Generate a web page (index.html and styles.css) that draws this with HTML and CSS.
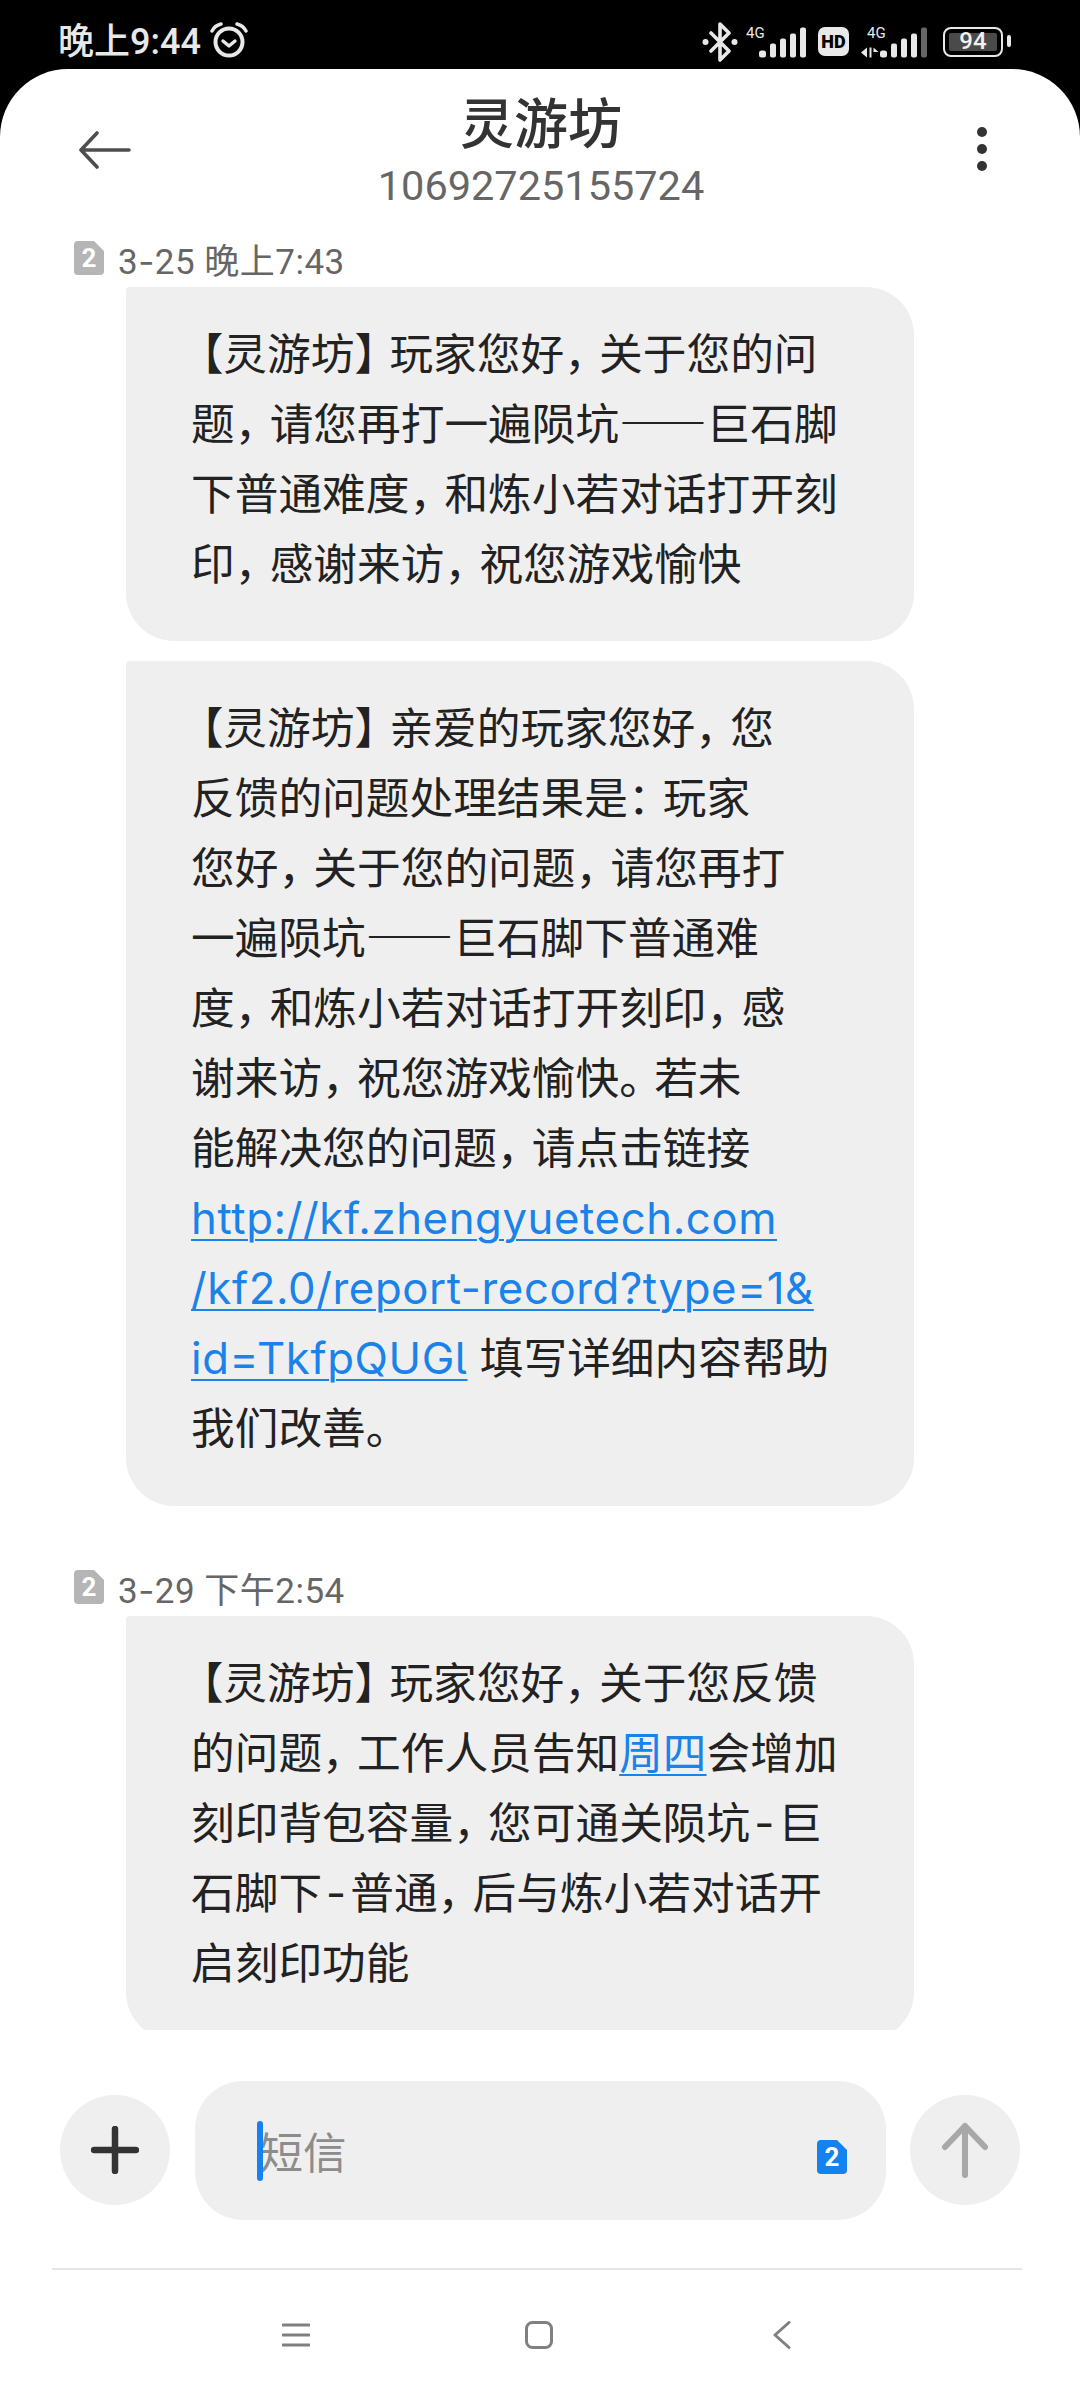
FILE: index.html
```html
<!DOCTYPE html>
<html lang="zh-CN">
<head>
    <meta charset="UTF-8">
    <meta name="viewport" content="width=device-width, initial-scale=1.0">
    <title>灵游坊 - 短信</title>
    <link rel="stylesheet" href="styles.css">
</head>
<body>

<div class="status-bar">
    <div class="status-left">
        <span class="clock">晚上9:44</span>
        <svg class="alarm" viewBox="0 0 40 36" width="40" height="36">
            <circle cx="20" cy="20" r="13.5" fill="none" stroke="#e8e8e8" stroke-width="4"/>
            <path d="M14 19l6 5 6-5" fill="none" stroke="#e8e8e8" stroke-width="3.4" stroke-linecap="round" stroke-linejoin="round"/>
            <path d="M3 9C5 5 8 3 12 2M37 9C35 5 32 3 28 2" fill="none" stroke="#e8e8e8" stroke-width="3.4" stroke-linecap="round"/>
        </svg>
    </div>
    <div class="status-right">
        <svg class="bluetooth" viewBox="0 0 36 40" width="36" height="40">
            <path d="M9 11l18 18-9 9V2l9 9-18 18" fill="none" stroke="#e8e8e8" stroke-width="3.6" stroke-linejoin="round" stroke-linecap="round"/>
            <circle cx="3.5" cy="20" r="3" fill="#e8e8e8"/>
            <circle cx="32.5" cy="20" r="3" fill="#e8e8e8"/>
        </svg>
        <svg class="signal" viewBox="0 0 60 36" width="60" height="36">
            <text x="0" y="13.5" class="net-label">4G</text>
            <rect x="13" y="26.5" width="7" height="7" rx="2.5" fill="#e8e8e8"/>
            <rect x="24" y="19.5" width="6" height="14" rx="2" fill="#e8e8e8"/>
            <rect x="34" y="14.5" width="6" height="19" rx="2" fill="#e8e8e8"/>
            <rect x="44" y="9.5" width="6" height="24" rx="2" fill="#e8e8e8"/>
            <rect x="54" y="3.5" width="6" height="30" rx="2" fill="#e8e8e8"/>
        </svg>
        <div class="hd">HD</div>
        <svg class="signal-two" viewBox="0 0 66 36" width="66" height="36">
            <text x="6" y="13.5" class="net-label">4G</text>
            <path d="M6 23.5l-6 5 6 5zM8.500 23.500h2v10h-2zM12.500 23.500l5 4.500h-5z" fill="#e8e8e8"/>
            <rect x="19" y="26.500" width="7" height="7" rx="2.500" fill="#e8e8e8"/>
            <rect x="30" y="19.500" width="6" height="14" rx="2" fill="#e8e8e8"/>
            <rect x="40" y="14.500" width="6" height="19" rx="2" fill="#e8e8e8"/>
            <rect x="50" y="9.500" width="6" height="24" rx="2" fill="#e8e8e8"/>
            <rect x="60" y="3.500" width="6" height="30" rx="2" fill="#666"/>
        </svg>
        <div class="battery">
            <div class="battery-level">94</div>
        </div>
    </div>
</div>

<div class="sheet">
    <header class="top-bar">
        <svg class="back-arrow" viewBox="0 0 54 38" width="54" height="38">
            <path d="M51 19H3M19 2L3 19l16 17" fill="none" stroke="#4d4d4d" stroke-width="3.6" stroke-linecap="round" stroke-linejoin="round"/>
        </svg>
        <div class="contact">
            <div class="contact-name">灵游坊</div>
            <div class="contact-number">10692725155724</div>
        </div>
        <div class="more-dots">
            <span></span>
            <span></span>
            <span></span>
        </div>
    </header>

    <main class="messages">
        <section class="day-group">
            <div class="stamp">
                <svg class="sim-badge" viewBox="0 0 30 34" width="30" height="34">
                    <path d="M4 0h16l10 10v20a4 4 0 0 1-4 4H4a4 4 0 0 1-4-4V4a4 4 0 0 1 4-4z" fill="#b5b5b5"/>
                    <text x="15" y="26" class="sim-number">2</text>
                </svg>
                <span>3<b class="dash">-</b>25 晚上7:43</span>
            </div>
            <div class="bubble"><b class="open">【</b>灵游坊<b class="pu">】</b>玩家您好<b class="pu">，</b>关于您的问<br>题<b class="pu">，</b>请您再打一遍陨坑<b class="long-dash">——</b>巨石脚<br>下普通难度<b class="pu">，</b>和炼小若对话打开刻<br>印<b class="pu">，</b>感谢来访<b class="pu">，</b>祝您游戏愉快</div>
            <div class="bubble bubble-long"><b class="open">【</b>灵游坊<b class="pu">】</b>亲爱的玩家您好<b class="pu">，</b>您<br>反馈的问题处理结果是<b class="pu">：</b>玩家<br>您好<b class="pu">，</b>关于您的问题<b class="pu">，</b>请您再打<br>一遍陨坑<b class="long-dash">——</b>巨石脚下普通难<br>度<b class="pu">，</b>和炼小若对话打开刻印<b class="pu">，</b>感<br>谢来访<b class="pu">，</b>祝您游戏愉快<b class="pu">。</b>若未<br>能解决您的问题<b class="pu">，</b>请点击链接<br><a href="#" class="url">http://kf.zhengyuetech.com</a><br><a href="#" class="url">/kf2.0/report-record?type=1&amp;</a><br><a href="#" class="url">id=TkfpQUGl</a> 填写详细内容帮助<br>我们改善<b class="pu">。</b></div>
        </section>

        <section class="day-group day-group-next">
            <div class="stamp">
                <svg class="sim-badge" viewBox="0 0 30 34" width="30" height="34">
                    <path d="M4 0h16l10 10v20a4 4 0 0 1-4 4H4a4 4 0 0 1-4-4V4a4 4 0 0 1 4-4z" fill="#b5b5b5"/>
                    <text x="15" y="26" class="sim-number">2</text>
                </svg>
                <span>3<b class="dash">-</b>29 下午2:54</span>
            </div>
            <div class="bubble"><b class="open">【</b>灵游坊<b class="pu">】</b>玩家您好<b class="pu">，</b>关于您反馈<br>的问题<b class="pu">，</b>工作人员告知<a href="#">周四</a>会增加<br>刻印背包容量<b class="pu">，</b>您可通关陨坑<b class="hy">-</b>巨<br>石脚下<b class="hy">-</b>普通<b class="pu">，</b>后与炼小若对话开<br>启刻印功能</div>
        </section>
    </main>

    <div class="composer">
        <div class="round-btn">
            <svg viewBox="0 0 48 48" width="48" height="48">
                <path d="M24 3v42M3 24h42" fill="none" stroke="#333" stroke-width="6.5" stroke-linecap="round"/>
            </svg>
        </div>
        <div class="input-box">
            <i class="caret"></i>
            <span class="placeholder">短信</span>
            <svg class="sim-active" viewBox="0 0 30 34" width="30" height="34">
                <path d="M4 0h16l10 10v20a4 4 0 0 1-4 4H4a4 4 0 0 1-4-4V4a4 4 0 0 1 4-4z" fill="#1482f0"/>
                <text x="15" y="26" class="sim-number">2</text>
            </svg>
        </div>
        <div class="round-btn">
            <svg viewBox="0 0 48 56" width="48" height="56">
                <path d="M24 53V4M4 25L24 4l20 21" fill="none" stroke="#a8a8a8" stroke-width="6" stroke-linecap="round" stroke-linejoin="round"/>
            </svg>
        </div>
    </div>

    <nav class="nav-bar">
        <svg viewBox="0 0 28 26" width="28" height="26">
            <path d="M1 3h26M1 13h26M1 23h26" fill="none" stroke="#808080" stroke-width="3" stroke-linecap="round"/>
        </svg>
        <svg class="nav-home" viewBox="0 0 28 28" width="28" height="28">
            <rect x="1.5" y="1.5" width="25" height="25" rx="6" fill="none" stroke="#808080" stroke-width="3"/>
        </svg>
        <svg viewBox="0 0 18 28" width="18" height="28">
            <path d="M16 1.5L2 14l14 12.5" fill="none" stroke="#808080" stroke-width="3" stroke-linecap="round" stroke-linejoin="round"/>
        </svg>
    </nav>
</div>

</body>
</html>
```

FILE: styles.css
```css
* {
    margin: 0;
    padding: 0;
    box-sizing: border-box;
}

body {
    width: 1080px;
    height: 2400px;
    overflow: hidden;
    background-color: #000;
    font-family: "Roboto", "Noto Sans CJK SC", sans-serif;
    display: flex;
    flex-direction: column;
}

/* Status bar */
.status-bar {
    height: 69px;
    flex: none;
    display: flex;
    justify-content: space-between;
    align-items: center;
    padding: 14px 77px 0 58px;
    color: #e8e8e8;
}

.status-left {
    display: flex;
    align-items: center;
    gap: 8px;
    margin-top: -7px;
}

.clock {
    font-size: 36px;
    font-weight: 500;
}

.alarm {
    margin-top: 4px;
}

.status-right {
    display: flex;
    align-items: center;
    gap: 12px;
}

.signal {
    margin-left: -4px;
}

.net-label {
    font-family: "Roboto", sans-serif;
    font-size: 15px;
    fill: #e8e8e8;
}

.hd {
    width: 31px;
    height: 29px;
    border-radius: 7px;
    background-color: #e8e8e8;
    color: #000;
    font-size: 18px;
    font-weight: 900;
    line-height: 29px;
    text-align: center;
}

.battery {
    width: 60px;
    height: 30px;
    margin-left: 4px;
    padding: 4px;
    border: 2.5px solid #e8e8e8;
    border-radius: 8px;
    position: relative;
}

.battery::after {
    content: "";
    position: absolute;
    right: -10px;
    top: 6px;
    width: 4px;
    height: 12px;
    border-radius: 2px;
    background-color: #e8e8e8;
}

.battery-level {
    height: 100%;
    background-color: #4a4a4a;
    border-radius: 2px;
    color: #f0f0f0;
    font-size: 24px;
    font-weight: 500;
    line-height: 17px;
    text-align: center;
}

/* White sheet */
.sheet {
    flex: 1;
    display: flex;
    flex-direction: column;
    background-color: #fff;
    border-radius: 68px 68px 0 0;
    min-height: 0;
}

.top-bar {
    height: 172px;
    flex: none;
    display: grid;
    grid-template-columns: 1fr auto 1fr;
    align-items: start;
    padding: 0 93px 0 78px;
}

.back-arrow {
    margin-top: 62px;
}

.contact {
    text-align: center;
    padding-top: 24px;
    margin-left: 17px;
}

.contact-name {
    font-size: 54px;
    font-weight: 500;
    line-height: 66px;
    color: #333;
}

.contact-number {
    font-size: 41.5px;
    line-height: 54px;
    color: #666;
}

.more-dots {
    display: flex;
    flex-direction: column;
    gap: 7px;
    margin-top: 58px;
    justify-self: end;
}

.more-dots span {
    width: 10px;
    height: 10px;
    border-radius: 50%;
    background-color: #333;
}

/* Conversation */
.messages {
    height: 1789px;
    flex: none;
    overflow: hidden;
}

.stamp {
    display: flex;
    align-items: center;
    gap: 14px;
    height: 34px;
    margin-left: 74px;
    font-size: 35px;
    letter-spacing: 0.5px;
    color: #666;
}

.dash {
    font-family: "Inter", sans-serif;
    font-weight: 400;
}

.sim-number {
    font-family: "Roboto", sans-serif;
    font-size: 26px;
    font-weight: 700;
    letter-spacing: 0;
    text-anchor: middle;
    fill: #fff;
}

.day-group-next {
    margin-top: 64px;
}

.bubble {
    width: 788px;
    margin: 12px 0 0 126px;
    padding: 33px 40px 41px 65px;
    background-color: #efefef;
    border-radius: 4px 48px 48px 48px;
    font-family: "Inter", "Noto Sans CJK SC", sans-serif;
    font-size: 43.7px;
    line-height: 70px;
    color: #222;
    white-space: nowrap;
}

.bubble-long {
    margin-top: 20px;
    padding-bottom: 42px;
}

.bubble b {
    font-weight: 400;
}

/* CJK punctuation sits tighter here than a full em */
.pu {
    letter-spacing: -0.2em;
}

.open {
    margin-left: -0.26em;
}

.hy {
    margin: 0 4px;
}

.bubble .long-dash {
    font-family: "Noto Sans CJK SC", sans-serif;
    font-weight: 500;
    line-height: 0;
}

.bubble a {
    color: #1a82e8;
    text-decoration: underline;
    text-decoration-thickness: 2px;
    text-underline-offset: 5px;
}

.bubble .url {
    font-feature-settings: "cv05";
    letter-spacing: 0.6px;
}

/* Input row */
.composer {
    height: 240px;
    flex: none;
    display: flex;
    align-items: center;
    justify-content: space-between;
    margin: 0 58px 0 52px;
    padding: 2px 2px 0 8px;
    border-bottom: 2px solid #e6e6e6;
}

.round-btn {
    width: 110px;
    height: 110px;
    border-radius: 50%;
    background-color: #efefef;
    display: flex;
    align-items: center;
    justify-content: center;
}

.input-box {
    width: 691px;
    height: 139px;
    border-radius: 48px;
    background-color: #efefef;
    display: flex;
    align-items: center;
    padding: 0 39px 0 62px;
    position: relative;
    font-size: 43.5px;
    color: #8c8c8c;
}

.caret {
    position: absolute;
    left: 62px;
    top: 40px;
    width: 6px;
    height: 60px;
    border-radius: 3px;
    background-color: #1482f0;
}

.placeholder {
    flex: 1;
    margin-left: 3px;
}

.sim-active {
    margin-top: 14px;
}

/* Bottom navigation */
.nav-bar {
    flex: 1;
    display: flex;
    align-items: center;
    justify-content: space-between;
    padding: 0 289px 0 282px;
}

.nav-home {
    margin-right: 6px;
}
```
